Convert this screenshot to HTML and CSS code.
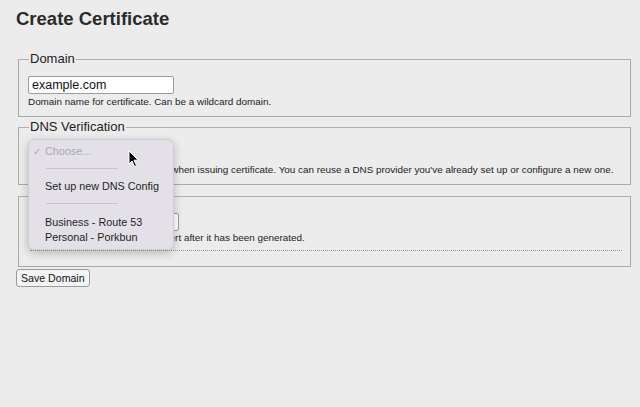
FILE: index.html
```html
<!DOCTYPE html>
<html>
<head>
<meta charset="utf-8">
<link rel="stylesheet" href="styles.css">
</head>
<body>
<h1 class="title">Create Certificate</h1>
<form class="form">
  <fieldset class="group">
    <legend class="legend">Domain</legend>
    <input class="field" type="text" value="example.com">
    <div class="help">Domain name for certificate. Can be a wildcard domain.</div>
  </fieldset>
  <fieldset class="group">
    <legend class="legend">DNS Verification</legend>
    <div class="select-slot">
      <div class="menu">
        <div class="item muted"><span class="check">✓</span>Choose...</div>
        <div class="sep"></div>
        <div class="item">Set up new DNS Config</div>
        <div class="sep second"></div>
        <div class="item tight">Business - Route 53</div>
        <div class="item tight">Personal - Porkbun</div>
      </div>
      <svg class="cursor" width="12" height="18" viewBox="0 0 12 18"><path d="M1 1 L1 14 L4 11 L6.5 16.5 L8.5 15.5 L6 10.2 L10.2 10.2 Z" fill="#000" stroke="#fff" stroke-width="1" stroke-linejoin="round"/></svg>
    </div>
    <div class="help">Selects the DNS provider to use when issuing certificate. You can reuse a DNS provider you've already set up or configure a new one.</div>
  </fieldset>
  <fieldset class="group g3">
    <legend class="legend">Name</legend>
    <input class="field wide" type="text" value="">
    <div class="help">The friendly name used for the cert after it has been generated.</div>
    <div class="dots"></div>
  </fieldset>
  <button class="btn" type="button">Save Domain</button>
</form>
</body>
</html>
```
FILE: styles.css
```css
html, body {
  margin: 0;
  background: #ececec;
}
body {
  padding: 8px 9px 0 16px;
  font-family: "Liberation Sans", Arial, sans-serif;
  color: #222;
}
.title {
  margin: 0;
  font-size: 18.5px;
  font-weight: bold;
  line-height: 22px;
  color: #2b2b2b;
}
.form {
  display: flex;
  flex-direction: column;
  align-items: flex-start;
  margin-top: 21px;
}
.group {
  align-self: stretch;
  margin: 0 0 0 2px;
  padding: 0 8px 7px 9px;
  border: 1px solid #a8a8a8;
  border-top-color: #b0b0b0;
}
.group + .group {
  margin-top: 2px;
}
.legend {
  padding: 0 1px;
  margin-left: 1px;
  font-size: 13px;
  line-height: 16px;
  color: #222;
}
.field {
  display: block;
  box-sizing: border-box;
  width: 146px;
  height: 18px;
  margin: 9px 0 0;
  padding: 0 3px;
  border: 1px solid #9c9c9c;
  border-radius: 2px;
  background: #fff;
  font: 12.5px "Liberation Sans", Arial, sans-serif;
  color: #111;
}
.field.wide { width: 151px; }
.help {
  font-size: 9.9px;
  line-height: 14px;
  margin-top: 1px;
  color: #222;
}
.select-slot {
  position: relative;
  height: 18px;
  margin-top: 9px;
}
.menu {
  position: absolute;
  left: 0;
  top: -5px;
  width: 146px;
  box-sizing: border-box;
  padding: 3px 0 4px;
  background: #e3e1e7;
  border: 1px solid #cfcdd3;
  border-radius: 6px;
  box-shadow: 0 3px 10px rgba(0,0,0,0.22);
  z-index: 5;
  font-size: 10.8px;
  color: #1f1f1f;
}
.item {
  padding-left: 16px;
  line-height: 17px;
  position: relative;
}
.item.tight { line-height: 15px; }
.item.muted { color: #a9a8ad; }
.check {
  position: absolute;
  left: 4px;
  font-size: 10px;
}
.sep {
  height: 1px;
  background: #c6c4ca;
  width: 72px;
  margin: 8px 0 9px 17px;
}
.sep.second { margin-bottom: 11px; }
.cursor {
  position: absolute;
  left: 100px;
  top: 6px;
  z-index: 6;
}
.group.g3 {
  margin-top: 3px;
  padding-bottom: 15px;
}
.g3 .field { margin-top: 9px; }
.g3 .help { margin-top: 0; }
.dots {
  border-bottom: 1px dotted #9a9a9a;
  margin: 5px 0 0 2px;
}
.btn {
  margin-top: 2px;
  padding: 0 4px;
  font: 10.6px "Liberation Sans", Arial, sans-serif;
  color: #111;
  background: #f4f4f4;
  border: 1px solid #9a9a9a;
  border-radius: 3px;
  height: 18px;
}
```
